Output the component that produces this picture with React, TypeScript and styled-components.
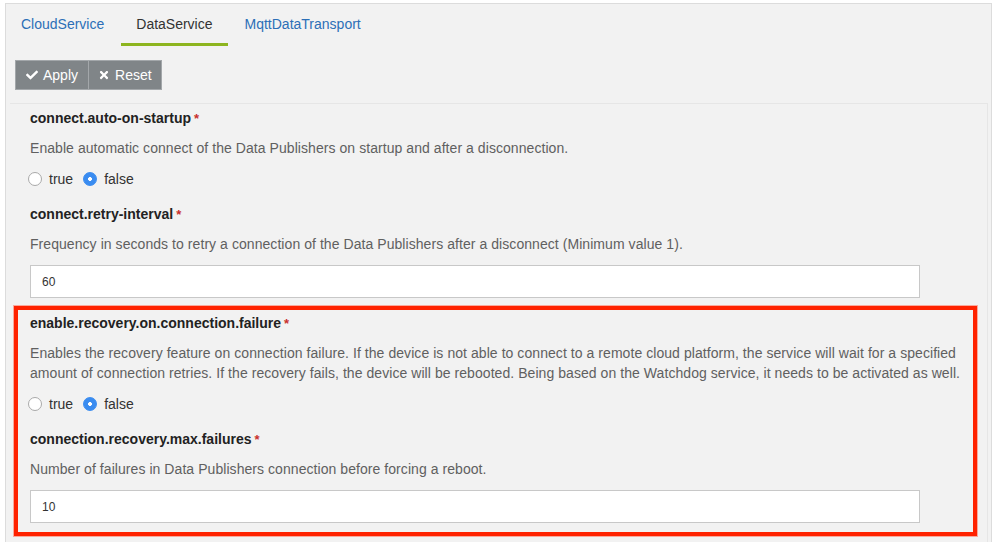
import React from "react";
import styled, { createGlobalStyle } from "styled-components";
import { FaCheck, FaTimes } from "react-icons/fa";

const Global = createGlobalStyle`
  html, body { margin: 0; padding: 0; background: #ffffff; }
  body { font-family: "Liberation Sans", Arial, Helvetica, sans-serif; font-size: 14px; color: #333; }
  * { box-sizing: border-box; }
`;

const Panel = styled.div`
  margin: 3px 4px 0 5px;
  height: 539px;
  border: 1px solid #dcdcdc;
  border-bottom: none;
  background: #f2f2f2;
  display: flex;
  flex-direction: column;
  overflow: hidden;
`;

const Tabs = styled.nav`
  display: flex;
  height: 42px;
`;

const Tab = styled.a<{ $active?: boolean }>`
  display: flex;
  align-items: center;
  padding: 0 15px;
  margin-right: 2px;
  height: 42px;
  border-bottom: 3px solid ${(p) => (p.$active ? "#8db51f" : "transparent")};
  color: ${(p) => (p.$active ? "#333333" : "#2c6fb7")};
  font-size: 14px;
  text-decoration: none;
  cursor: pointer;
`;

const Toolbar = styled.div`
  display: flex;
  padding: 14px 0 13px 9px;
`;

const Button = styled.button`
  display: flex;
  align-items: center;
  gap: 5px;
  height: 30px;
  padding: 0 10px 0 10px;
  background: #808588;
  border: 1px solid #a3a7aa;
  color: #ffffff;
  font-family: inherit;
  font-size: 14px;
  & + & { border-left: none; padding: 0 9px; }
  svg { width: 12px; height: 12px; }
`;

const Content = styled.div`
  margin: 0 3px 0 4px;
  border-top: 1px solid #e6e6e6;
  border-right: 1px solid #e6e6e6;
  padding: 4px 20px 0 20px;
  flex: 1;
`;

const Field = styled.div<{ $gap: number }>`
  padding-bottom: ${(p) => p.$gap}px;
`;

const Label = styled.div`
  font-weight: bold;
  font-size: 14px;
  line-height: 20px;
  color: #222;
  margin-bottom: 9px;
`;

const Required = styled.span`
  color: #c9302c;
  font-weight: bold;
  font-size: 13px;
  margin-left: 3px;
`;

const Description = styled.div`
  font-size: 14px;
  line-height: 20px;
  letter-spacing: 0.06px;
  color: #606060;
  margin-bottom: 11px;
`;

const RadioRow = styled.div`
  display: flex;
  align-items: center;
  height: 20px;
  margin: 1px 0 0 -2px;
`;

const RadioLabel = styled.label`
  display: flex;
  align-items: center;
  gap: 7px;
  margin-right: 10px;
  font-size: 14px;
  color: #333;
`;

const Radio = styled.input.attrs({ type: "radio" })`
  appearance: none;
  -webkit-appearance: none;
  margin: 0;
  width: 14px;
  height: 14px;
  border-radius: 50%;
  border: 1px solid #a9a9a9;
  background: #fff;
  &:checked {
    border-color: #3a8cf0;
    background: radial-gradient(circle, #ffffff 0 1.6px, #3a8cf0 2.2px);
  }
`;

const TextInput = styled.input`
  display: block;
  width: 890px;
  height: 33px;
  border: 1px solid #c8c8c8;
  background: #ffffff;
  padding: 0 11px;
  font-family: inherit;
  font-size: 12px;
  color: #333;
  outline: none;
`;

const Highlight = styled.div`
  margin: 0 -10px 0 -16px;
  padding: 3px 6px 9px 12px;
  border: 4px solid #ff2200;
  box-shadow: 0 0 0 1px rgba(255, 120, 100, 0.6);
`;

type Def =
  | { name: string; desc: string; kind: "bool"; value: boolean }
  | { name: string; desc: string; kind: "text"; value: string };

const FieldView: React.FC<{ def: Def; last?: boolean }> = ({ def, last }) => (
  <Field $gap={last ? 0 : def.kind === "bool" ? 15 : 8}>
    <Label>
      {def.name}
      <Required>*</Required>
    </Label>
    <Description>{def.desc}</Description>
    {def.kind === "bool" ? (
      <RadioRow>
        <RadioLabel>
          <Radio name={def.name} defaultChecked={def.value} />
          true
        </RadioLabel>
        <RadioLabel>
          <Radio name={def.name} defaultChecked={!def.value} />
          false
        </RadioLabel>
      </RadioRow>
    ) : (
      <TextInput defaultValue={def.value} />
    )}
  </Field>
);

const top: Def[] = [
  {
    name: "connect.auto-on-startup",
    desc: "Enable automatic connect of the Data Publishers on startup and after a disconnection.",
    kind: "bool",
    value: false,
  },
  {
    name: "connect.retry-interval",
    desc: "Frequency in seconds to retry a connection of the Data Publishers after a disconnect (Minimum value 1).",
    kind: "text",
    value: "60",
  },
];

const highlighted: Def[] = [
  {
    name: "enable.recovery.on.connection.failure",
    desc: "Enables the recovery feature on connection failure. If the device is not able to connect to a remote cloud platform, the service will wait for a specified amount of connection retries. If the recovery fails, the device will be rebooted. Being based on the Watchdog service, it needs to be activated as well.",
    kind: "bool",
    value: false,
  },
  {
    name: "connection.recovery.max.failures",
    desc: "Number of failures in Data Publishers connection before forcing a reboot.",
    kind: "text",
    value: "10",
  },
];

export default function App() {
  return (
    <>
      <Global />
      <Panel>
        <Tabs>
          <Tab>CloudService</Tab>
          <Tab $active>DataService</Tab>
          <Tab>MqttDataTransport</Tab>
        </Tabs>
        <Toolbar>
          <Button>
            <FaCheck /> Apply
          </Button>
          <Button>
            <FaTimes /> Reset
          </Button>
        </Toolbar>
        <Content>
          {top.map((d) => (
            <FieldView key={d.name} def={d} />
          ))}
          <Highlight>
            {highlighted.map((d, i) => (
              <FieldView key={d.name} def={d} last={i === highlighted.length - 1} />
            ))}
          </Highlight>
        </Content>
      </Panel>
    </>
  );
}
